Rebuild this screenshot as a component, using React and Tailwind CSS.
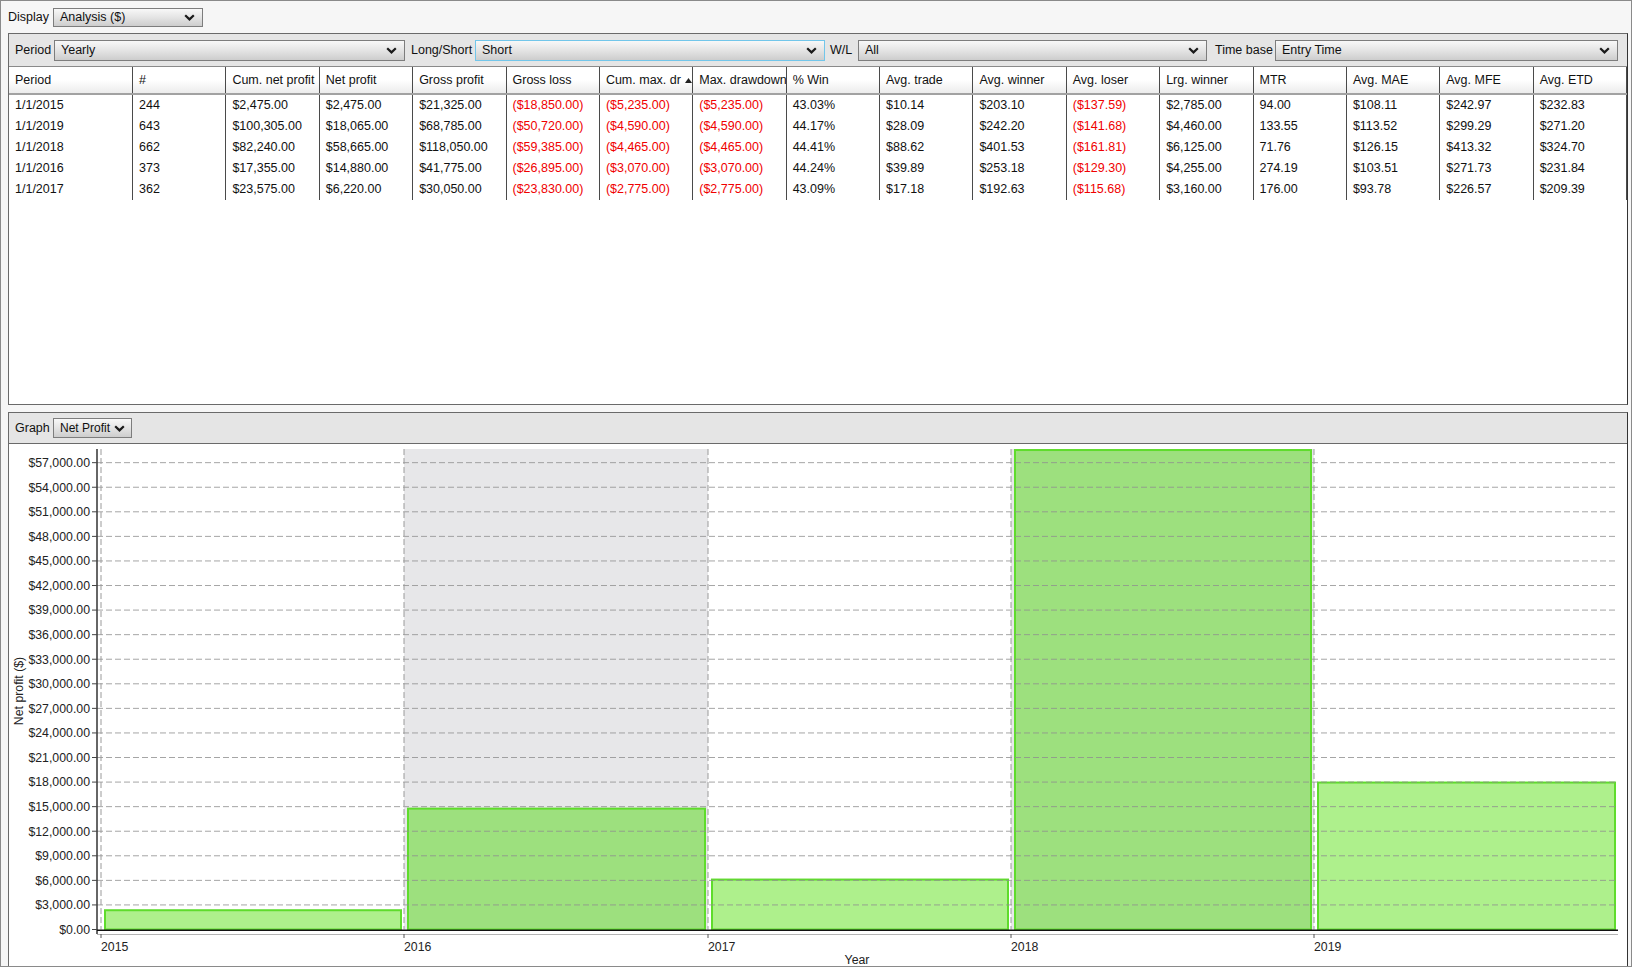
import React from 'react';

const rows = [
  ['1/1/2015', '244', '$2,475.00', '$2,475.00', '$21,325.00', '($18,850.00)', '($5,235.00)', '($5,235.00)', '43.03%', '$10.14', '$203.10', '($137.59)', '$2,785.00', '94.00', '$108.11', '$242.97', '$232.83'],
  ['1/1/2019', '643', '$100,305.00', '$18,065.00', '$68,785.00', '($50,720.00)', '($4,590.00)', '($4,590.00)', '44.17%', '$28.09', '$242.20', '($141.68)', '$4,460.00', '133.55', '$113.52', '$299.29', '$271.20'],
  ['1/1/2018', '662', '$82,240.00', '$58,665.00', '$118,050.00', '($59,385.00)', '($4,465.00)', '($4,465.00)', '44.41%', '$88.62', '$401.53', '($161.81)', '$6,125.00', '71.76', '$126.15', '$413.32', '$324.70'],
  ['1/1/2016', '373', '$17,355.00', '$14,880.00', '$41,775.00', '($26,895.00)', '($3,070.00)', '($3,070.00)', '44.24%', '$39.89', '$253.18', '($129.30)', '$4,255.00', '274.19', '$103.51', '$271.73', '$231.84'],
  ['1/1/2017', '362', '$23,575.00', '$6,220.00', '$30,050.00', '($23,830.00)', '($2,775.00)', '($2,775.00)', '43.09%', '$17.18', '$192.63', '($115.68)', '$3,160.00', '176.00', '$93.78', '$226.57', '$209.39'],
];

const headers = ['Period', '#', 'Cum. net profit', 'Net profit', 'Gross profit', 'Gross loss', 'Cum. max. dr', 'Max. drawdown', '% Win', 'Avg. trade', 'Avg. winner', 'Avg. loser', 'Lrg. winner', 'MTR', 'Avg. MAE', 'Avg. MFE', 'Avg. ETD'];

const bars = [
  { year: '2015', value: 2475, x: 101, dark: false },
  { year: '2016', value: 14880, x: 404, dark: true },
  { year: '2017', value: 6220, x: 708, dark: false },
  { year: '2018', value: 58665, x: 1011, dark: true },
  { year: '2019', value: 18065, x: 1314, dark: false },
];

const ZERO = 930.5;
const STEP = 24.57;
const TOP = ZERO - (58665 / 3000) * STEP;
const yOf = (v) => ZERO - (v / 3000) * STEP;

function Chevron() {
  return (
    <svg width="11" height="7" viewBox="0 0 11 7" className="shrink-0">
      <polyline points="1.2,1.2 5.5,5.4 9.8,1.2" fill="none" stroke="#1a1a1a" strokeWidth="2.2" />
    </svg>
  );
}

function Select({ label, className, focus }) {
  return (
    <div
      className={`flex items-center justify-between gap-[4px] whitespace-nowrap pl-[6px] pr-[7px] border bg-gradient-to-b from-[#f8f8f8] via-[#e4e4e4] to-[#cdcdcd] text-[#111] ${focus ? 'border-[#72c6ea]' : 'border-[#7d7d7d]'} ${className}`}
    >
      <span>{label}</span>
      <Chevron />
    </div>
  );
}

function Chart() {
  const ticks = [];
  for (let v = 0; v <= 57000; v += 3000) ticks.push(v);
  const ends = [404, 708, 1011, 1314, 1618];
  return (
    <svg width="1618" height="522" viewBox="9 445 1618 522" className="block shrink-0" fontFamily="'Liberation Sans', Arial, sans-serif">
      <rect x="9" y="445" width="1618" height="522" fill="#ffffff" />
      {bars.map((b, i) =>
        b.dark ? <rect key={i} x={b.x} y={TOP} width={ends[i] - b.x} height={ZERO - TOP} fill="#e7e7e9" /> : null
      )}
      {bars.map((b, i) => {
        const left = b.x + 3;
        const right = i === 4 ? 1616 : ends[i] - 2;
        const top = yOf(b.value);
        return (
          <rect
            key={b.year}
            x={left + 1}
            y={top + 1}
            width={right - left - 2}
            height={ZERO - top - 1}
            fill={b.dark ? '#9de07e' : '#aef08c'}
            stroke="#5fdc2c"
            strokeWidth="2"
          />
        );
      })}
      {ticks.slice(1).map((v) => (
        <line key={v} x1="97" x2="1618" y1={yOf(v)} y2={yOf(v)} stroke="#8f8f8f" strokeOpacity="0.8" strokeDasharray="6 3" strokeWidth="1" />
      ))}
      {bars.map((b) => (
        <line key={b.year} x1={b.x} x2={b.x} y1={TOP} y2={ZERO} stroke="#9a9a9a" strokeDasharray="6 3" strokeWidth="1" />
      ))}
      <line x1="97" x2="97" y1={TOP} y2="935" stroke="#333" strokeWidth="1.5" />
      {ticks.map((v) => (
        <g key={v}>
          <line x1="92" x2="97" y1={yOf(v)} y2={yOf(v)} stroke="#444" strokeWidth="1" />
          <text x="90" y={yOf(v) + 4.3} textAnchor="end" fontSize="12.3" fill="#222">
            ${v.toLocaleString('en-US')}.00
          </text>
        </g>
      ))}
      <line x1="97" x2="1618" y1="931.3" y2="931.3" stroke="#111" strokeWidth="1.6" />
      <line x1="97" x2="1618" y1="935.5" y2="935.5" stroke="#b4b4b4" strokeWidth="1" />
      {bars.map((b) => (
        <g key={b.year}>
          <line x1={b.x} x2={b.x} y1="935" y2="939" stroke="#555" strokeWidth="1" />
          <text x={b.x} y="952" fontSize="12.3" fill="#222">{b.year}</text>
        </g>
      ))}
      <text x="857" y="965" textAnchor="middle" fontSize="12.3" fill="#222">Year</text>
      <text x="0" y="0" transform="translate(23 692) rotate(-90)" textAnchor="middle" fontSize="12.3" fill="#222">
        Net profit ($)
      </text>
    </svg>
  );
}

export default function App() {
  return (
    <div className="w-[1632px] h-[967px] overflow-hidden border border-[#8a8a8a] bg-[#f6f6f6] flex flex-col font-['Liberation_Sans',Arial,sans-serif] text-[12.5px] text-[#111]">
      {/* display row */}
      <div className="h-[32px] flex items-center pl-[7px] shrink-0">
        <span className="w-[45px]">Display</span>
        <Select label="Analysis ($)" className="w-[150px] h-[19px]" />
      </div>

      {/* analysis panel */}
      <div className="ml-[7px] w-[1620px] h-[372px] shrink-0 border border-[#6a6a6a] border-r-[#333] bg-white flex flex-col">
        <div className="h-[33px] shrink-0 flex items-center pl-[6px] whitespace-nowrap bg-[#e5e5e5] border-b border-[#8a8a8a]">
          <span className="w-[39px]">Period</span>
          <Select label="Yearly" className="w-[351px] h-[21px]" />
          <span className="w-[64px] ml-[6px]">Long/Short</span>
          <Select label="Short" className="w-[350px] h-[21px]" focus />
          <span className="w-[28px] ml-[5px]">W/L</span>
          <Select label="All" className="w-[349px] h-[21px]" />
          <span className="w-[60px] ml-[8px]">Time base</span>
          <Select label="Entry Time" className="w-[343px] h-[21px]" />
        </div>

        <div className="grid grid-cols-[124px_repeat(16,minmax(0,1fr))] h-[28px] shrink-0 border-b-2 border-[#a2a2a2] bg-gradient-to-b from-white via-white to-[#ececec]">
          {headers.map((h, i) => (
            <div key={i} className="flex items-center justify-between px-[6px] border-r border-[#4a4a4a] whitespace-nowrap overflow-hidden">
              <span>{h}</span>
              {i === 6 && (
                <svg width="7" height="5" viewBox="0 0 7 5" className="shrink-0 ml-[4px]">
                  <polygon points="0,5 3.5,0 7,5" fill="#222" />
                </svg>
              )}
            </div>
          ))}
        </div>

        <div className="flex flex-col">
          {rows.map((r, ri) => (
            <div key={ri} className="grid grid-cols-[124px_repeat(16,minmax(0,1fr))] h-[21px]">
              {r.map((c, ci) => (
                <div
                  key={ci}
                  className={`px-[6px] leading-[21px] border-r border-[#4a4a4a] whitespace-nowrap overflow-hidden ${c.startsWith('(') ? 'text-[#f00000]' : ''}`}
                >
                  {c}
                </div>
              ))}
            </div>
          ))}
        </div>
      </div>

      {/* graph panel */}
      <div className="ml-[7px] mt-[7px] w-[1620px] flex-1 min-h-0 border-l border-t border-r border-[#6a6a6a] border-r-[#333] bg-white flex flex-col">
        <div className="h-[31px] shrink-0 flex items-center pl-[6px] whitespace-nowrap bg-[#e5e5e5] border-b border-[#6a6a6a]">
          <span className="w-[38px]">Graph</span>
          <Select label="Net Profit" className="w-[79px] h-[20px] pl-[5px] pr-[4px] text-[12px]" />
        </div>
        <Chart />
      </div>
    </div>
  );
}
